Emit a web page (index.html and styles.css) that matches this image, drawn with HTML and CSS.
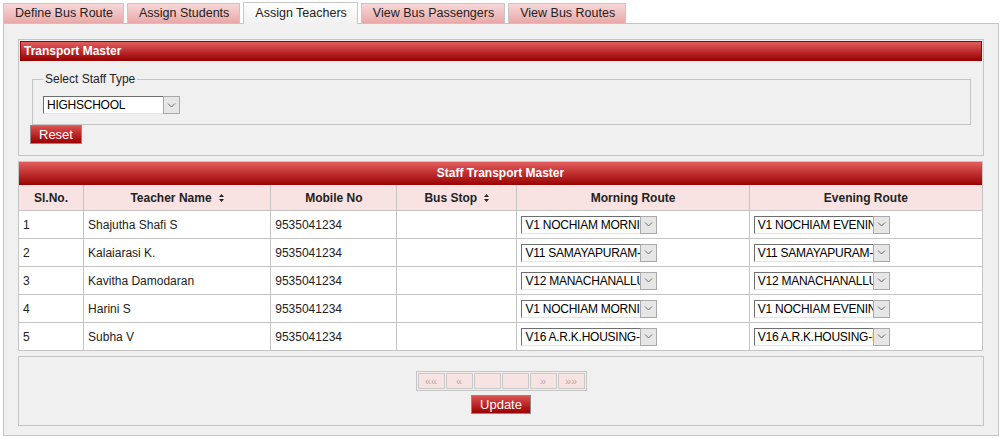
FILE: index.html
```html
<!DOCTYPE html>
<html lang="en">

<head>
    <meta charset="UTF-8">
    <meta name="viewport" content="width=device-width, initial-scale=1.0">
    <title>Assign Teachers</title>
    <link rel="stylesheet" href="styles.css">
</head>

<body>
    <div class="tabs">
        <a class="tab">Define Bus Route</a>
        <a class="tab">Assign Students</a>
        <a class="tab active">Assign Teachers</a>
        <a class="tab">View Bus Passengers</a>
        <a class="tab">View Bus Routes</a>
    </div>

    <div class="panel">
        <!-- transport master -->
        <div class="box">
            <div class="bar">Transport Master</div>
            <div class="box-body">
                <fieldset class="staff-type">
                    <legend>Select Staff Type</legend>
                    <div class="combo combo-wide">
                        <span class="combo-text">HIGHSCHOOL</span>
                        <span class="combo-btn"><svg width="9" height="5" viewBox="0 0 9 5"><path d="M1 0.5 L4.5 4 L8 0.5" fill="none" stroke="#6a6a6a" stroke-width="1"/></svg></span>
                    </div>
                </fieldset>
                <button class="btn">Reset</button>
            </div>
        </div>

        <!-- staff list -->
        <div class="grid">
            <div class="bar bar-title">Staff Transport Master</div>
            <table>
                <colgroup>
                    <col style="width: 64px">
                    <col style="width: 187px">
                    <col style="width: 126px">
                    <col style="width: 120px">
                    <col style="width: 232px">
                    <col style="width: 233px">
                </colgroup>
                <thead>
                    <tr>
                        <th>Sl.No.</th>
                        <th>Teacher Name <span class="sort"><svg width="5" height="8" viewBox="0 0 5 8"><path d="M2.5 0 L5 3 L0 3 Z M0 5 L5 5 L2.5 8 Z" fill="#222"/></svg></span></th>
                        <th>Mobile No</th>
                        <th>Bus Stop <span class="sort"><svg width="5" height="8" viewBox="0 0 5 8"><path d="M2.5 0 L5 3 L0 3 Z M0 5 L5 5 L2.5 8 Z" fill="#222"/></svg></span></th>
                        <th>Morning Route</th>
                        <th>Evening Route</th>
                    </tr>
                </thead>
                <tbody id="rows"></tbody>
            </table>
        </div>

        <!-- pager + update -->
        <div class="footer">
            <div class="pager">
                <span class="page">&laquo;&laquo;</span>
                <span class="page">&laquo;</span>
                <span class="page"></span>
                <span class="page"></span>
                <span class="page">&raquo;</span>
                <span class="page">&raquo;&raquo;</span>
            </div>
            <button class="btn">Update</button>
        </div>
    </div>

    <script>
        var teachers = [
            ['Shajutha Shafi S', 'V1 NOCHIAM MORNING', 'V1 NOCHIAM EVENING'],
            ['Kalaiarasi K.', 'V11 SAMAYAPURAM-MORNING', 'V11 SAMAYAPURAM-EVENING'],
            ['Kavitha Damodaran', 'V12 MANACHANALLUR', 'V12 MANACHANALLUR'],
            ['Harini S', 'V1 NOCHIAM MORNING', 'V1 NOCHIAM EVENING'],
            ['Subha V', 'V16 A.R.K.HOUSING-MORNING', 'V16 A.R.K.HOUSING-EVENING']
        ];

        function combo(text) {
            return '<div class="combo"><span class="combo-text">' + text + '</span>' +
                '<span class="combo-btn"><svg width="9" height="5" viewBox="0 0 9 5"><path d="M1 0.5 L4.5 4 L8 0.5" fill="none" stroke="#6a6a6a" stroke-width="1"/></svg></span></div>';
        }

        var rows = document.getElementById('rows');
        var html = '';
        for (var i = 0; i < teachers.length; i++) {
            html += '<tr>' +
                '<td>' + (i + 1) + '</td>' +
                '<td>' + teachers[i][0] + '</td>' +
                '<td>9535041234</td>' +
                '<td></td>' +
                '<td>' + combo(teachers[i][1]) + '</td>' +
                '<td>' + combo(teachers[i][2]) + '</td>' +
                '</tr>';
        }
        rows.innerHTML = html;
    </script>
</body>

</html>
```

FILE: styles.css
```css
* {
    margin: 0;
    padding: 0;
}

body {
    font-family: "Liberation Sans", Arial, sans-serif;
    font-size: 12px;
    color: #222;
    background: #fff;
}

/* tabs */
.tabs {
    display: flex;
    align-items: flex-end;
    gap: 3px;
    height: 22px;
    padding: 2px 0 0 3px;
    margin-bottom: -1px;
    position: relative;
    z-index: 1;
}

.tab {
    box-sizing: border-box;
    height: 20px;
    margin-bottom: 1px;
    padding: 0 10px 0 11px;
    border: 1px solid #c6c6c6;
    border-bottom: none;
    background: linear-gradient(#f7d8d8, #e9a8a8);
    font-size: 12.5px;
    line-height: 19px;
    color: #222;
    cursor: pointer;
}

.tab.active {
    height: 22px;
    margin-bottom: 0;
    background: linear-gradient(#ffffff, #f0f0f0);
    line-height: 20px;
}

/* panel */
.panel {
    margin: 0 2px 0 3px;
    padding: 15px 14px 9px 14px;
    border: 1px solid #c4c4c4;
    background: #f0f0f0;
}

.box {
    padding: 1px;
    border: 1px solid #c4c4c4;
}

.bar {
    height: 18px;
    padding-left: 3px;
    border: 1px solid #960000;
    background: linear-gradient(#e35d5d, #9a0202);
    color: #fff;
    font-weight: bold;
    line-height: 18px;
}

.box-body {
    padding: 11px 11px 10px 10px;
}

.staff-type {
    margin-left: 2px;
    padding: 10px 10px 10px 10px;
    border: 1px solid #c4c4c4;
}

.staff-type legend {
    padding: 0 2px;
}

/* select look-alike */
.combo {
    display: flex;
    box-sizing: border-box;
    width: 136px;
    height: 18px;
    border: 1px solid;
    border-color: #6e6e6e #e4e4e4 #e4e4e4 #6e6e6e;
    background: #fff;
}

.combo-wide {
    width: 137px;
}

.combo-text {
    flex: 1;
    overflow: hidden;
    white-space: nowrap;
    padding-left: 3px;
    line-height: 16px;
    letter-spacing: -0.25px;
    color: #000;
}

.combo-btn {
    display: flex;
    align-items: center;
    justify-content: center;
    box-sizing: border-box;
    width: 17px;
    margin: -1px -1px -1px 0;
    border: 1px solid #a9a9a9;
    background: #e6e6e6;
}

.btn {
    height: 19px;
    padding: 0 8px;
    border: 1px solid #8a8a8a;
    background: linear-gradient(#db5050, #9a0000);
    color: #fff;
    font-family: "Liberation Sans", Arial, sans-serif;
    font-size: 13px;
    line-height: 17px;
    cursor: pointer;
}

.box-body .btn {
    display: block;
}

/* staff grid */
.grid {
    margin: 5px 1px 0 0;
    border: 1px solid #c4c4c4;
    background: #fff;
}

.bar-title {
    height: 23px;
    padding: 0;
    border: none;
    text-align: center;
    line-height: 23px;
}

table {
    width: 100%;
    table-layout: fixed;
    border-collapse: separate;
    border-spacing: 0;
}

th,
td {
    box-sizing: border-box;
    border-left: 1px solid #c4c4c4;
    border-bottom: 1px solid #c4c4c4;
    text-align: left;
    white-space: nowrap;
    line-height: 14px;
}

th:first-child,
td:first-child {
    border-left: none;
}

th {
    height: 26px;
    padding: 0 4px;
    background: #f8e2e2;
    font-weight: bold;
    text-align: center;
    color: #222;
}

td {
    height: 28px;
    padding: 0 4px;
    color: #222;
}

tbody tr:last-child td {
    border-bottom: none;
    height: 27px;
}

.sort {
    display: inline-block;
    margin-left: 4px;
    vertical-align: 0;
}

.sort svg {
    display: block;
}

/* footer */
.footer {
    display: flex;
    flex-direction: column;
    align-items: center;
    gap: 4px;
    margin-top: 5px;
    padding: 14px 0 11px;
    border: 1px solid #c4c4c4;
}

.pager {
    display: flex;
    gap: 1px;
    padding: 1px;
    border: 1px solid #c4c4c4;
}

.page {
    box-sizing: border-box;
    width: 27px;
    height: 16px;
    border: 1px solid #c8c8c8;
    background: #f8e3e3;
    color: #bba9a9;
    font-size: 11px;
    line-height: 14px;
    text-align: center;
}
```
